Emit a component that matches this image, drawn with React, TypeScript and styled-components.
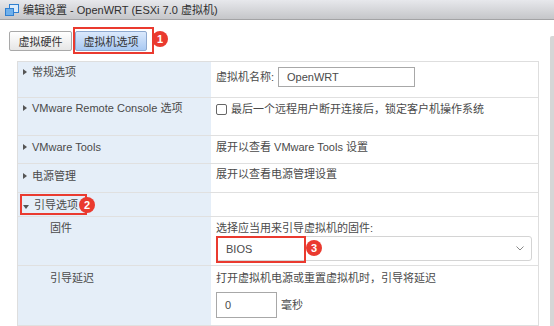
import * as React from 'react'
import styled, { createGlobalStyle } from 'styled-components'

const Global = createGlobalStyle`
    html, body {
        margin: 0;
        padding: 0;
        background: #ffffff;
    }
    body {
        font-family: "Liberation Sans", Arial, "Noto Sans CJK SC", sans-serif;
        font-size: 11px;
        color: #4a4a4a;
    }
`

const Page = styled.div`
    width: 554px;
    height: 326px;
    overflow: hidden;
    display: flex;
    flex-direction: column;
`

const TitleBar = styled.div`
    height: 26px;
    box-sizing: border-box;
    display: flex;
    align-items: center;
    gap: 3px;
    padding-left: 4px;
    background: linear-gradient(#e7e8ec, #c5c6c9);
    border-bottom: 1px solid #a3a3a5;
`

const TitleText = styled.span`
    font-size: 11px;
    color: #2e2e2e;
    line-height: 16px;
`

const Body = styled.div`
    flex: 1;
    display: flex;
    padding: 11px 0 0 9px;
`

const Main = styled.div`
    flex: 1;
    display: flex;
    flex-direction: column;
`

const ScrollTrack = styled.div`
    width: 4px;
    margin-top: 5px;
    margin-left: 11px;
    border-radius: 2px 0 0 0;
    background: #d6d6d6;
`

const Tabs = styled.div`
    display: flex;
    gap: 3px;
    height: 20px;
`

const Tab = styled.div<{ $active?: boolean; $w: number }>`
    width: ${p => p.$w}px;
    height: 20px;
    box-sizing: border-box;
    display: flex;
    align-items: center;
    justify-content: center;
    border: 1px solid ${p => (p.$active ? '#8ea9cf' : '#a9a9a9')};
    border-radius: 2px;
    background: ${p => (p.$active ? 'linear-gradient(#dbe9fc, #a9c9f3)' : 'linear-gradient(#ffffff, #e6e6e6)')};
    color: #333;
    font-size: 11px;
`

const Marked = styled.div`
    position: relative;
`

const RedFrame = styled.div<{ $t: number; $l: number; $r: number; $b: number }>`
    position: absolute;
    top: ${p => p.$t}px;
    left: ${p => p.$l}px;
    right: ${p => p.$r}px;
    bottom: ${p => p.$b}px;
    border: 2px solid #ea3a2f;
    pointer-events: none;
`

const Badge = styled.div<{ $x: number; $y: number }>`
    position: absolute;
    left: ${p => p.$x}px;
    top: ${p => p.$y}px;
    width: 16px;
    height: 16px;
    border-radius: 50%;
    background: #ea3a2f;
    color: #fff;
    font-size: 11px;
    font-weight: bold;
    line-height: 16px;
    text-align: center;
`

const Table = styled.div`
    margin: 10px 0 0 8px;
    width: 522px;
    box-sizing: border-box;
    border: 1px solid #dedede;
    border-bottom: none;
    display: flex;
    flex-direction: column;
`

const Row = styled.div<{ $h: number }>`
    height: ${p => p.$h}px;
    box-sizing: border-box;
    display: grid;
    grid-template-columns: 193px 1fr;
    border-bottom: 1px solid #e0e0e0;
    flex-shrink: 0;
`

const LeftCell = styled.div<{ $pad?: number; $top?: number }>`
    background: #e5eef8;
    padding: ${p => p.$top ?? 2}px 0 0 ${p => p.$pad ?? 5}px;
    display: flex;
    align-items: flex-start;
    line-height: 16px;
`

const RightCell = styled.div<{ $top?: number }>`
    padding: ${p => p.$top ?? 2}px 6px 0 5px;
    line-height: 16px;
    display: flex;
    flex-direction: column;
    align-items: flex-start;
`

const Inline = styled.div`
    display: flex;
    align-items: center;
    gap: 4px;
`

const Caret = styled.span<{ $open?: boolean }>`
    display: inline-block;
    width: 0;
    height: 0;
    margin-right: 5px;
    ${p =>
        p.$open
            ? `border-left: 3px solid transparent; border-right: 3px solid transparent; border-top: 4px solid #555; margin-top: 6px;`
            : `border-top: 3px solid transparent; border-bottom: 3px solid transparent; border-left: 4px solid #555; margin-top: 5px;`}
`

const TextInput = styled.div<{ $w: number; $h: number }>`
    width: ${p => p.$w}px;
    height: ${p => p.$h}px;
    box-sizing: border-box;
    border: 1px solid #a8a8a8;
    padding-left: 8px;
    display: flex;
    align-items: center;
    background: #fff;
`

const CheckBox = styled.span`
    width: 11px;
    height: 11px;
    box-sizing: border-box;
    border: 1px solid #666;
    border-radius: 2px;
    display: inline-block;
`

const Select = styled.div`
    width: 316px;
    height: 25px;
    box-sizing: border-box;
    border: 1px solid #d4d4d4;
    border-radius: 3px;
    display: flex;
    align-items: center;
    justify-content: space-between;
    padding: 0 7px 0 9px;
    background: #fff;
`

const DelayRow = styled.div`
    margin-top: 6px;
    display: flex;
    align-items: center;
    gap: 4px;
`

function VmIcon() {
    return (
        <svg width="16" height="14" viewBox="0 0 16 14">
            <rect x="5.5" y="1.5" width="9" height="8" fill="#dcebfa" stroke="#2f7fd0" />
            <rect x="1.5" y="5.5" width="8" height="7" fill="#6fb0ec" stroke="#2f7fd0" />
        </svg>
    )
}

function Chevron() {
    return (
        <svg width="8" height="5" viewBox="0 0 8 5">
            <path d="M0.5 0.5 L4 4 L7.5 0.5" fill="none" stroke="#888" strokeWidth="1" />
        </svg>
    )
}

export default function App() {
    return (
        <Page>
            <Global />
            <TitleBar>
                <VmIcon />
                <TitleText>编辑设置 - OpenWRT (ESXi 7.0 虚拟机)</TitleText>
            </TitleBar>
            <Body>
                <Main>
                    <Tabs>
                        <Tab $w={63}>虚拟硬件</Tab>
                        <Marked>
                            <Tab $active $w={72}>虚拟机选项</Tab>
                            <RedFrame $t={-4} $l={-2} $r={-7} $b={-3} />
                            <Badge $x={77} $y={0}>1</Badge>
                        </Marked>
                    </Tabs>
                    <Table>
                        <Row $h={36}>
                            <LeftCell><Caret />常规选项</LeftCell>
                            <RightCell $top={5}>
                                <Inline>
                                    虚拟机名称:
                                    <TextInput $w={137} $h={20}>OpenWRT</TextInput>
                                </Inline>
                            </RightCell>
                        </Row>
                        <Row $h={38}>
                            <LeftCell><Caret />VMware Remote Console 选项</LeftCell>
                            <RightCell $top={3}>
                                <Inline><CheckBox />最后一个远程用户断开连接后，锁定客户机操作系统</Inline>
                            </RightCell>
                        </Row>
                        <Row $h={28}>
                            <LeftCell $top={3}><Caret />VMware Tools</LeftCell>
                            <RightCell $top={3}>展开以查看 VMware Tools 设置</RightCell>
                        </Row>
                        <Row $h={29}>
                            <LeftCell $top={4}><Caret />电源管理</LeftCell>
                            <RightCell $top={2}>展开以查看电源管理设置</RightCell>
                        </Row>
                        <Row $h={24}>
                            <LeftCell $top={4}>
                                <Marked>
                                    <Caret $open />引导选项
                                    <RedFrame $t={-3} $l={-3} $r={-9} $b={-2} />
                                    <Badge $x={56} $y={0}>2</Badge>
                                </Marked>
                            </LeftCell>
                            <RightCell />
                        </Row>
                        <Row $h={49}>
                            <LeftCell $top={3} $pad={32}>固件</LeftCell>
                            <RightCell $top={3}>
                                选择应当用来引导虚拟机的固件:
                                <Marked>
                                    <Select>
                                        BIOS
                                        <Chevron />
                                    </Select>
                                    <RedFrame $t={0} $l={0} $r={226} $b={-2} />
                                    <Badge $x={90} $y={4}>3</Badge>
                                </Marked>
                            </RightCell>
                        </Row>
                        <Row $h={60}>
                            <LeftCell $top={4} $pad={32}>引导延迟</LeftCell>
                            <RightCell $top={4}>
                                打开虚拟机电源或重置虚拟机时，引导将延迟
                                <DelayRow>
                                    <TextInput $w={61} $h={26}>0</TextInput>
                                    毫秒
                                </DelayRow>
                            </RightCell>
                        </Row>
                    </Table>
                </Main>
                <ScrollTrack />
            </Body>
        </Page>
    )
}
